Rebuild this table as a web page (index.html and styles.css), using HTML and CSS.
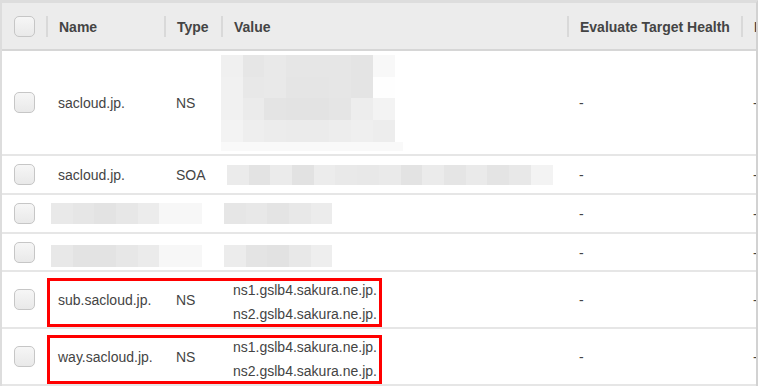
FILE: index.html
```html
<!DOCTYPE html>
<html lang="en">
<head>
<meta charset="utf-8">
<title>Record sets</title>
<link rel="stylesheet" href="styles.css">
</head>
<body>
<div class="wrap">
  <div class="row head">
    <div class="cell chk"><span class="box"></span></div>
    <div class="cell th">Name</div>
    <div class="cell th">Type</div>
    <div class="cell th">Value</div>
    <div class="cell th">Evaluate Target Health</div>
    <div class="cell th">Health Check ID</div>
  </div>
  <div class="row r-tall">
    <div class="cell chk"><span class="box"></span></div>
    <div class="cell">sacloud.jp.</div>
    <div class="cell">NS</div>
    <div class="cell flush"><div class="blur blur-ns"></div></div>
    <div class="cell">-</div>
    <div class="cell">-</div>
  </div>
  <div class="row r-small">
    <div class="cell chk"><span class="box"></span></div>
    <div class="cell">sacloud.jp.</div>
    <div class="cell">SOA</div>
    <div class="cell flush"><div class="blur blur-soa"></div></div>
    <div class="cell">-</div>
    <div class="cell">-</div>
  </div>
  <div class="row r-small">
    <div class="cell chk"><span class="box"></span></div>
    <div class="cell flush"><div class="blur blur-name1"></div></div>
    <div class="cell"></div>
    <div class="cell flush"><div class="blur blur-val1"></div></div>
    <div class="cell">-</div>
    <div class="cell">-</div>
  </div>
  <div class="row r-small r-small-b">
    <div class="cell chk"><span class="box"></span></div>
    <div class="cell flush"><div class="blur blur-name2 low"></div></div>
    <div class="cell"></div>
    <div class="cell flush"><div class="blur blur-val2 low"></div></div>
    <div class="cell">-</div>
    <div class="cell">-</div>
  </div>
  <div class="row r-mid">
    <div class="cell chk"><span class="box"></span></div>
    <div class="cell">sub.sacloud.jp.</div>
    <div class="cell">NS</div>
    <div class="cell lines"><span>ns1.gslb4.sakura.ne.jp.</span><span>ns2.gslb4.sakura.ne.jp.</span></div>
    <div class="cell">-</div>
    <div class="cell">-</div>
    <div class="mark"></div>
  </div>
  <div class="row r-mid">
    <div class="cell chk"><span class="box"></span></div>
    <div class="cell">way.sacloud.jp.</div>
    <div class="cell">NS</div>
    <div class="cell lines"><span>ns1.gslb4.sakura.ne.jp.</span><span>ns2.gslb4.sakura.ne.jp.</span></div>
    <div class="cell">-</div>
    <div class="cell">-</div>
    <div class="mark"></div>
  </div>
</div>
</body>
</html>
```

FILE: styles.css
```css
html, body {
  margin: 0;
  padding: 0;
  background: #ffffff;
}

body {
  font-family: "Liberation Sans", Arial, sans-serif;
  font-size: 14px;
  color: #444444;
}

.wrap {
  width: 758px;
  box-sizing: border-box;
  border-top: 3px solid #dddddd;
  border-left: 2px solid #dddddd;
  border-right: 2px solid #d2d2d2;
  overflow: hidden;
}

.row {
  position: relative;
  display: grid;
  grid-template-columns: 44px 118px 57px 346px 174px 160px;
  width: 899px;
  border-bottom: 2px solid #e6e6e6;
}

.head {
  height: 46px;
  background: #ececec;
  border-bottom: 2px solid #d6d6d6;
}

.r-tall { height: 103px; }
.r-small { height: 37px; }
.r-small-b { height: 36px; }
.r-mid { height: 55px; }

.cell {
  display: flex;
  align-items: center;
  padding: 1px 11px 0 12px;
  white-space: nowrap;
  min-width: 0;
}

.cell.flush {
  padding: 0;
}

.th {
  font-weight: bold;
  color: #444444;
  padding-left: 13px;
  padding-top: 2px;
  background: linear-gradient(#d9d9d9, #d9d9d9) no-repeat 0 50% / 2px 21px;
}

.chk {
  padding: 0 0 0 12px;
}

.box {
  display: block;
  width: 21px;
  height: 21px;
  box-sizing: border-box;
  border: 1px solid #c6c6c6;
  border-radius: 5px;
  background: linear-gradient(#f6f6f6, #e9e9e9);
}

.lines {
  flex-direction: column;
  align-items: flex-start;
  justify-content: center;
  line-height: 24px;
  padding-top: 5px;
}

.mark {
  position: absolute;
  left: 45px;
  top: 6px;
  width: 335px;
  height: 49px;
  box-sizing: border-box;
  border: 3px solid #ff0000;
}

.blur {
  flex: none;
}

.blur-ns {
  width: 182px;
  height: 96px;
  margin-top: 1px;
  background:
    linear-gradient(to right, #f0f0f0 0 22px, #e6e6e6 22px 43px, #e9e9e9 43px 65px, #e6e6e6 65px 87px, #e6e6e6 87px 108px, #e6e6e6 108px 130px, #e4e4e4 130px 152px, #f8f8f8 152px 174px, #ffffff 174px) 0 0 / 100% 22px no-repeat,
    linear-gradient(to right, #f1f1f1 0 22px, #e8e8e8 22px 43px, #e9e9e9 43px 65px, #e5e5e5 65px 87px, #e5e5e5 87px 108px, #e6e6e6 108px 130px, #e4e4e4 130px 152px, #fefefe 152px 174px, #ffffff 174px) 0 22px / 100% 21px no-repeat,
    linear-gradient(to right, #f1f1f1 0 22px, #ebebeb 22px 43px, #e4e4e4 43px 65px, #e3e3e3 65px 87px, #e3e3e3 87px 108px, #e5e5e5 108px 130px, #ededed 130px 152px, #f3f3f3 152px 174px, #ffffff 174px) 0 43px / 100% 22px no-repeat,
    linear-gradient(to right, #f3f3f3 0 22px, #eeeeee 22px 43px, #ececec 43px 65px, #ebebeb 65px 87px, #ebebeb 87px 108px, #ededed 108px 130px, #efefef 130px 152px, #ededed 152px 174px, #ffffff 174px) 0 65px / 100% 22px no-repeat,
    linear-gradient(#f9f9f9, #f9f9f9) 0 87px / 100% 9px no-repeat;
}

.blur-soa {
  width: 326px;
  height: 20px;
  margin-left: 6px;
  background: linear-gradient(to right,
    #ebebeb 0 22px, #e3e3e3 22px 43px, #ebebeb 43px 65px, #e2e2e2 65px 87px,
    #ececec 87px 108px, #e9e9e9 108px 130px, #e8e8e8 130px 152px, #eaeaea 152px 174px,
    #e3e3e3 174px 195px, #ebebeb 195px 217px, #e5e5e5 217px 239px, #eaeaea 239px 260px,
    #e4e4e4 260px 282px, #e8e8e8 282px 304px, #f3f3f3 304px 326px);
}

.blur-name1, .blur-name2 {
  width: 151px;
  height: 21px;
  margin-left: 5px;
}

.blur-name1 {
  background: linear-gradient(to right, #e9e9e9 0 22px, #e6e6e6 22px 43px, #e3e3e3 43px 65px, #e7e7e7 65px 87px, #ececec 87px 108px, #f7f7f7 108px 151px);
}

.blur-name2 {
  height: 22px;
  background: linear-gradient(to right, #e8e8e8 0 22px, #e3e3e3 22px 43px, #e3e3e3 43px 65px, #e7e7e7 65px 87px, #ebebeb 87px 108px, #f7f7f7 108px 151px);
}

.blur-val1, .blur-val2 {
  width: 108px;
  height: 21px;
  margin-left: 3px;
}

.blur-val1 {
  background: linear-gradient(to right, #e6e6e6 0 22px, #e8e8e8 22px 43px, #e4e4e4 43px 65px, #e8e8e8 65px 87px, #ececec 87px 108px);
}

.blur-val2 {
  height: 22px;
  background: linear-gradient(to right, #ececec 0 22px, #e4e4e4 22px 43px, #e2e2e2 43px 65px, #e8e8e8 65px 87px, #eeeeee 87px 108px);
}

.low {
  margin-top: 8px;
}
```
